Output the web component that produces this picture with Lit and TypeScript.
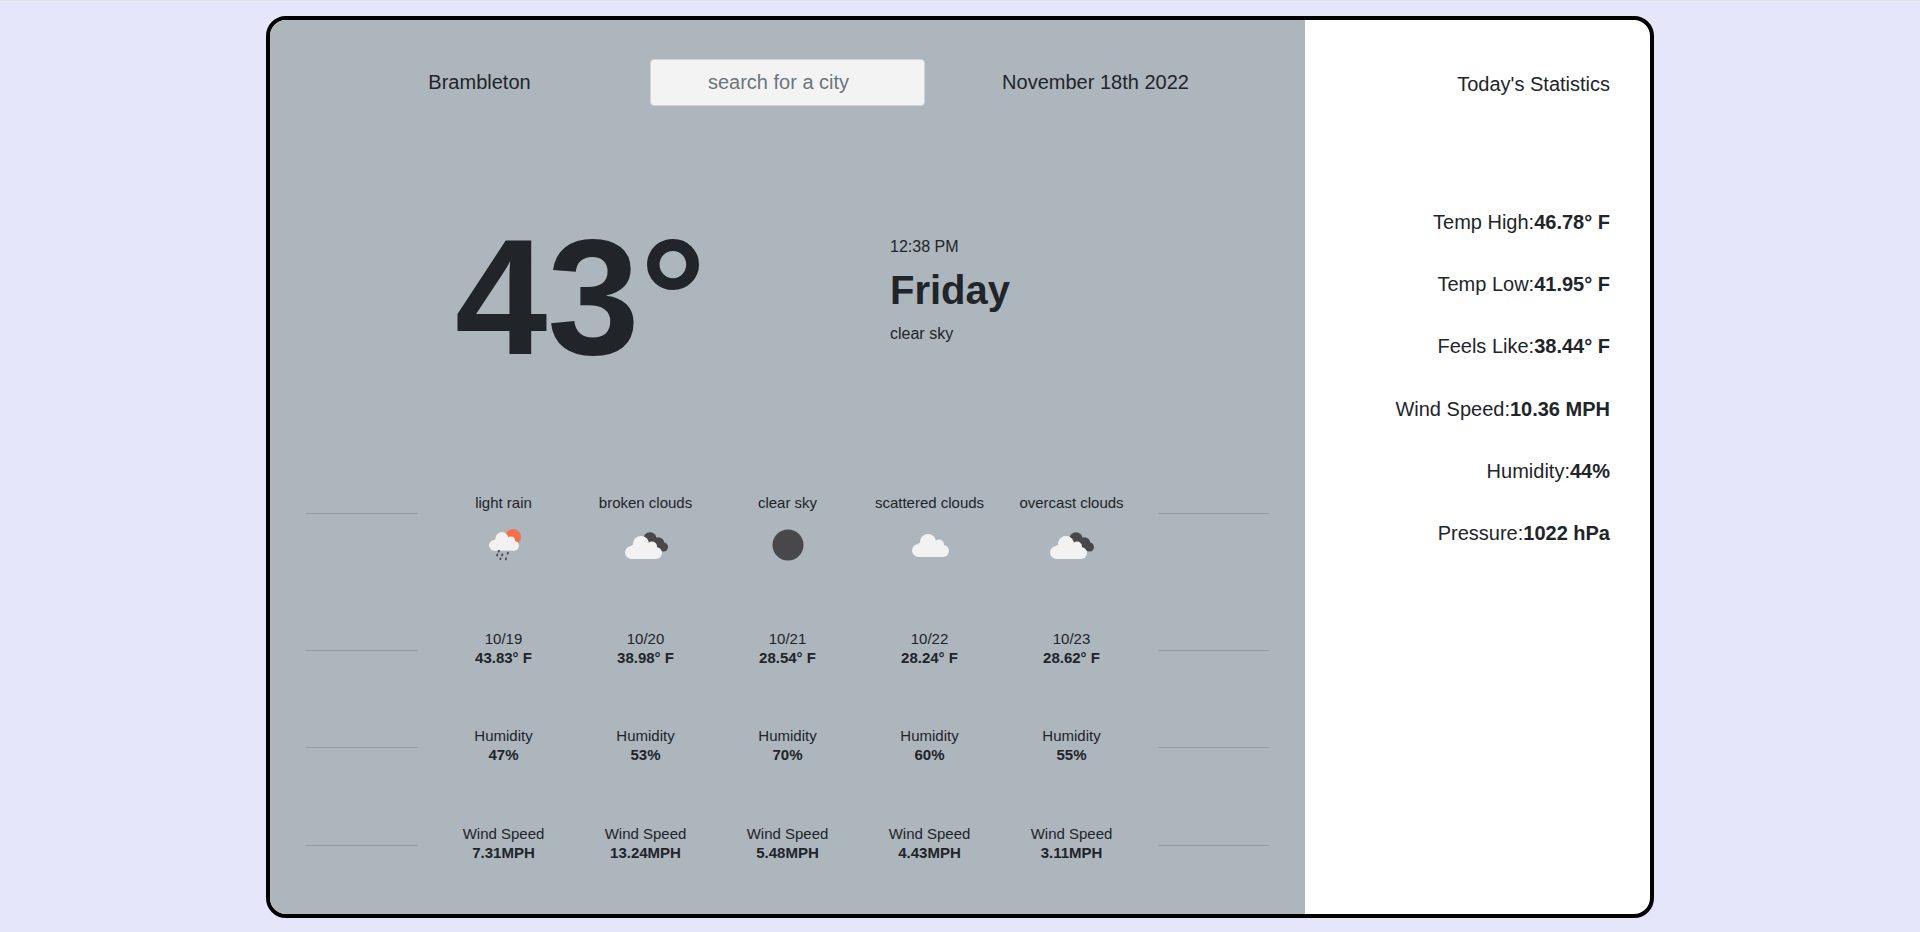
import { LitElement, html, css, svg } from "lit";
import { customElement } from "lit/decorators.js";

// white cloud built from lobes, origin at its top left corner (37x23)
const cloud = (x: number, y: number) => svg`
  <g transform="translate(${x} ${y})" fill="#f2f2f2">
    <circle cx="16" cy="8" r="8" />
    <circle cx="27" cy="10.5" r="5" />
    <circle cx="6.5" cy="16.5" r="6.5" />
    <circle cx="31" cy="17" r="6" />
    <rect x="6.5" y="9" width="24.5" height="14" />
  </g>
`;

const darkCloud = svg`
  <g fill="#48484a">
    <circle cx="29" cy="19" r="6.7" />
    <circle cx="37" cy="23.7" r="6.5" />
    <circle cx="42.5" cy="27" r="4.5" />
  </g>
`;

const icons: Record<string, unknown> = {
  rain: svg`
    <circle cx="34" cy="17" r="8" fill="#f4704a" />
    <g transform="translate(10 12) scale(.81 .81)">${cloud(0, 0)}</g>
    <g stroke="#48484a" stroke-width="1.7" stroke-linecap="round">
      <path d="M20 30.6l-.4 1" />
      <path d="M18.4 34.4l-.4 1.2" />
      <path d="M23.4 34.2l-.4 1.2" />
      <path d="M29 32.6l-.4 1" />
      <path d="M21.6 38.4l-.3 .8" />
      <path d="M27.2 38.2l-.4 1.2" />
    </g>
  `,
  broken: svg`${darkCloud}${cloud(4, 16)}`,
  clear: svg`<circle cx="25" cy="25" r="15.5" fill="#48484a" />`,
  scattered: cloud(7, 14),
  overcast: svg`${darkCloud}${cloud(3, 16)}`,
};

const forecast = [
  { desc: "light rain", icon: "rain", date: "10/19", temp: "43.83° F", humidity: "47%", wind: "7.31MPH" },
  { desc: "broken clouds", icon: "broken", date: "10/20", temp: "38.98° F", humidity: "53%", wind: "13.24MPH" },
  { desc: "clear sky", icon: "clear", date: "10/21", temp: "28.54° F", humidity: "70%", wind: "5.48MPH" },
  { desc: "scattered clouds", icon: "scattered", date: "10/22", temp: "28.24° F", humidity: "60%", wind: "4.43MPH" },
  { desc: "overcast clouds", icon: "overcast", date: "10/23", temp: "28.62° F", humidity: "55%", wind: "3.11MPH" },
];

const stats = [
  ["Temp High:", "46.78° F"],
  ["Temp Low:", "41.95° F"],
  ["Feels Like:", "38.44° F"],
  ["Wind Speed:", "10.36 MPH"],
  ["Humidity:", "44%"],
  ["Pressure:", "1022 hPa"],
];

@customElement("app-root")
export class AppRoot extends LitElement {
  static styles = css`
    :host {
      display: block;
      height: 932px;
      box-sizing: border-box;
      overflow: hidden;
      background: #e6e6fa;
      border-top: 1px solid #dee2e6;
      padding-top: 15px;
      font-family: "Liberation Sans", Arial, sans-serif;
      color: #212529;
    }
    .card {
      box-sizing: border-box;
      width: 1388px;
      height: 902px;
      margin-left: 266px;
      border: 4px solid #000;
      border-radius: 20px;
      overflow: hidden;
      display: grid;
      grid-template-columns: 1035px 345px;
      background: #fff;
    }
    .main {
      background: #adb5bd;
    }
    .top {
      display: grid;
      grid-template-columns: repeat(3, 308px);
      justify-content: center;
      align-items: center;
      padding-top: 39px;
      font-size: 20px;
      text-align: center;
    }
    input {
      box-sizing: border-box;
      width: 275px;
      height: 47px;
      justify-self: center;
      padding: 0 18px 0 0;
      border: 1px solid #ced4da;
      border-radius: 4px;
      background: #f3f3f3;
      font: inherit;
      text-align: center;
      color: #212529;
    }
    input::placeholder {
      color: #6c757d;
      opacity: 1;
    }
    .hero {
      display: flex;
      height: 377px;
      padding-left: 185px;
    }
    .now {
      width: 435px;
      padding-top: 91px;
      font-size: 166px;
      line-height: 200px;
      font-weight: 700;
    }
    .info {
      padding-top: 129px;
      font-size: 16px;
      line-height: 24px;
    }
    .info h2 {
      margin: 7px 0 8px;
      font-size: 40px;
      line-height: 48px;
      font-weight: 700;
    }
    .row {
      display: grid;
      grid-template-columns: 162.5px repeat(5, 142px) 162.5px;
      font-size: 15px;
      line-height: 19px;
      text-align: center;
    }
    .row.first {
      height: 136px;
      padding-top: 10px;
    }
    .row.dates {
      height: 97px;
    }
    .row.humidity {
      height: 98px;
    }
    .cell b {
      display: block;
    }
    .cell svg {
      display: block;
      margin: 8px auto 0;
    }
    .side {
      height: 1px;
      background: rgba(0, 0, 0, 0.15);
      margin: 21px 15px 0 36px;
    }
    .side.right {
      margin: 21px 36px 0 15px;
    }
    .first .side {
      margin-top: 20px;
    }
    .stats {
      padding: 52px 40px 0 0;
      text-align: right;
      font-size: 20px;
      line-height: 24px;
    }
    .stats h3 {
      margin: 0 0 114px;
      font-size: inherit;
      line-height: inherit;
      font-weight: 400;
    }
    .stats p {
      margin: 0 0 38.2px;
    }
  `;

  private row(name: string, cell: (d: (typeof forecast)[number]) => unknown) {
    return html`
      <div class="row ${name}">
        <div class="side"></div>
        ${forecast.map((d) => html`<div class="cell">${cell(d)}</div>`)}
        <div class="side right"></div>
      </div>
    `;
  }

  render() {
    return html`
      <div class="card">
        <section class="main">
          <div class="top">
            <span>Brambleton</span>
            <input placeholder="search for a city" />
            <span>November 18th 2022</span>
          </div>
          <div class="hero">
            <div class="now">43°</div>
            <div class="info">
              <div>12:38 PM</div>
              <h2>Friday</h2>
              <div>clear sky</div>
            </div>
          </div>
          ${this.row("first", (d) => html`
            ${d.desc}
            <svg width="50" height="50" viewBox="0 0 50 50">${icons[d.icon]}</svg>
          `)}
          ${this.row("dates", (d) => html`${d.date}<b>${d.temp}</b>`)}
          ${this.row("humidity", (d) => html`Humidity<b>${d.humidity}</b>`)}
          ${this.row("wind", (d) => html`Wind Speed<b>${d.wind}</b>`)}
        </section>
        <aside class="stats">
          <h3>Today's Statistics</h3>
          ${stats.map(([label, value]) => html`<p>${label}<b>${value}</b></p>`)}
        </aside>
      </div>
    `;
  }
}
